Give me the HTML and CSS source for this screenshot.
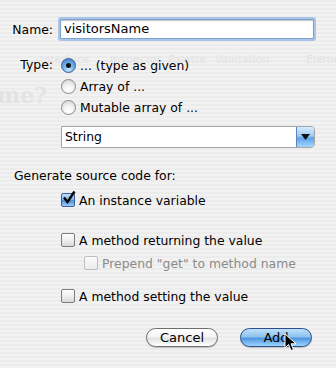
FILE: index.html
```html
<!DOCTYPE html>
<html>
<head>
    <title>Add Outlet</title>
    <link rel="stylesheet" href="styles.css">
</head>
<body>
    <div class="ghost">
        <span class="ghost-tab g1">Interface</span>
        <span class="ghost-tab g2">Inspector</span>
        <span class="ghost-tab g3">Palette</span>
        <span class="ghost-tab g4">Validation</span>
        <span class="ghost-tab g5">Eleme</span>
        <span class="ghost-title">me?</span>
    </div>

    <div class="sheet">
        <div class="form-row name-row">
            <label class="label">Name:</label>
            <div class="text-field">visitorsName</div>
        </div>

        <div class="form-row type-row">
            <span class="label">Type:</span>
            <div class="radio-group">
                <div class="option"><span class="radio selected"></span>... (type as given)</div>
                <div class="option"><span class="radio"></span>Array of ...</div>
                <div class="option"><span class="radio"></span>Mutable array of ...</div>
            </div>
        </div>

        <div class="popup">
            <span class="popup-value">String</span>
            <span class="popup-arrow">
                <svg width="9" height="6" viewBox="0 0 9 6"><path d="M0 0 L9 0 L4.5 6 Z" fill="#111"/></svg>
            </span>
        </div>

        <div class="section-title">Generate source code for:</div>

        <div class="checks">
            <div class="option check-first">
                <span class="checkbox checked">
                    <svg width="16" height="16" viewBox="0 0 16 16"><path d="M3 7.5 L6.5 12 L13.5 1.5" stroke="#000" stroke-width="2.4" fill="none"/></svg>
                </span>An instance variable
            </div>
            <div class="option check-gap"><span class="checkbox"></span>A method returning the value</div>
            <div class="option sub-option"><span class="checkbox disabled"></span>Prepend "get" to method name</div>
            <div class="option check-last"><span class="checkbox"></span>A method setting the value</div>
        </div>

        <div class="actions">
            <button class="button">Cancel</button>
            <button class="button default">Add</button>
            <svg class="cursor" width="14" height="20" viewBox="0 0 14 20">
                <path d="M1 1 L1 15 L4.5 11.5 L7 17.5 L9.5 16.5 L7 10.8 L12 10.8 Z" fill="#000" stroke="#fff" stroke-width="1"/>
            </svg>
        </div>
    </div>
</body>
</html>
```

FILE: styles.css
```css
body {
    margin: 0;
    width: 336px;
    height: 368px;
    overflow: hidden;
    font-family: "DejaVu Sans", sans-serif;
    font-size: 12.4px;
    color: #000;
    background-color: #ededed;
    background-image: repeating-linear-gradient(#ececec 0, #ececec 2px, #f2f2f2 2px, #f2f2f2 4px);
    position: relative;
}
.ghost {
    position: absolute;
    left: 0;
    top: 0;
    width: 336px;
    height: 368px;
    color: #e2e2e2;
}
.ghost-tab {
    position: absolute;
    top: 53px;
    font-size: 11px;
}
.g1 { left: 40px; }
.g2 { left: 110px; }
.g3 { left: 168px; }
.g4 { left: 215px; }
.g5 { left: 306px; }
.ghost-title {
    position: absolute;
    left: -3px;
    top: 82px;
    font-family: "DejaVu Serif", serif;
    font-weight: bold;
    font-size: 22px;
    color: #e3e3e3;
}
.sheet {
    position: relative;
    padding: 19px 0 0 0;
}
.form-row {
    display: flex;
}
.label {
    width: 53px;
    text-align: right;
    margin-right: 7px;
}
.name-row {
    align-items: center;
}
.text-field {
    width: 246px;
    height: 18px;
    line-height: 18px;
    padding: 0 3px;
    font-size: 13px;
    background: #fff;
    border: 1px solid #7da2ce;
    box-shadow: 0 0 0 2px #a9c6e8, inset 0 1px 1px rgba(0, 0, 0, 0.25);
    border-radius: 1px;
}
.type-row {
    margin-top: 18px;
}
.type-row .label {
    line-height: 16px;
}
.radio-group {
    display: flex;
    flex-direction: column;
    gap: 5px;
    margin-left: 1px;
}
.option {
    display: flex;
    align-items: center;
    height: 16px;
    white-space: nowrap;
}
.radio {
    width: 13px;
    height: 13px;
    border-radius: 50%;
    border: 1px solid #8a8a8a;
    background: radial-gradient(circle at 50% 75%, #ffffff 0, #f4f4f4 40%, #cfcfcf 100%);
    margin-right: 4px;
    position: relative;
    flex-shrink: 0;
}
.radio.selected {
    border-color: #3a5f96;
    background: radial-gradient(circle at 50% 80%, #c6e6ff 0, #6eaee8 45%, #3a79c8 100%);
}
.radio.selected::after {
    content: "";
    position: absolute;
    left: 4px;
    top: 4px;
    width: 5px;
    height: 5px;
    border-radius: 50%;
    background: #111;
}
.popup {
    display: flex;
    width: 252px;
    height: 20px;
    margin: 11px 0 0 61px;
    border: 1px solid #a5a5a5;
    border-radius: 0 4px 4px 0;
    background: #fff;
}
.popup-value {
    flex: 1;
    line-height: 20px;
    padding-left: 3px;
}
.popup-arrow {
    width: 17px;
    display: flex;
    align-items: center;
    justify-content: center;
    border-left: 1px solid #5a86c2;
    border-radius: 0 4px 4px 0;
    background: linear-gradient(#d6ecff 0, #9ccaf4 45%, #5fa3e8 55%, #a6d4fc 100%);
}
.section-title {
    margin: 20px 0 0 14px;
    line-height: 16px;
}
.checks {
    margin-left: 61px;
}
.check-first {
    margin-top: 8px;
}
.check-gap {
    margin-top: 24px;
}
.check-last {
    margin-top: 17px;
}
.sub-option {
    margin: 7px 0 0 23px;
    color: #8a8a8a;
}
.checkbox {
    width: 12px;
    height: 12px;
    border: 1px solid #7c7c7c;
    border-radius: 2px;
    background: linear-gradient(#ffffff 0, #f0f0f0 50%, #d8d8d8 100%);
    margin-right: 4px;
    position: relative;
    flex-shrink: 0;
}
.checkbox.checked {
    border-color: #3a5f96;
    background: linear-gradient(#c0e0ff 0, #78b4ec 50%, #4a8ad8 55%, #9ed0fa 100%);
}
.checkbox.checked svg {
    position: absolute;
    left: -1px;
    top: -4px;
}
.checkbox.disabled {
    border-color: #bdbdbd;
    background: linear-gradient(#fbfbfb, #ececec);
}
.actions {
    display: flex;
    gap: 22px;
    margin: 24px 0 0 146px;
    position: relative;
}
.button {
    width: 72px;
    height: 19px;
    padding: 0;
    font-family: "DejaVu Sans", sans-serif;
    font-size: 13px;
    color: #000;
    border: 1px solid #6f6f6f;
    border-radius: 10px;
    background: linear-gradient(#ffffff 0, #f4f4f4 45%, #e2e2e2 55%, #ffffff 100%);
    box-shadow: 0 1px 1px rgba(0, 0, 0, 0.2);
}
.button.default {
    border-color: #2b4f8c;
    background: linear-gradient(#bfe0fb 0, #8ec2ef 45%, #4f97e2 55%, #9ed4fc 100%);
}
.cursor {
    position: absolute;
    left: 138px;
    top: 5px;
}
```
